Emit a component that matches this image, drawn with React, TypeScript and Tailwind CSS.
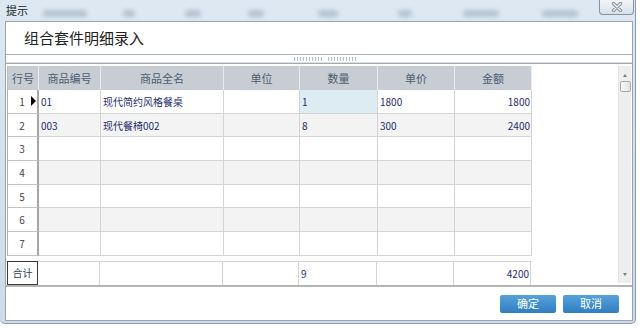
import React from "react";

// 组合套件明细录入 — a Win7-style modal dialog with a small data grid.
const FONT = { fontFamily: '"Noto Sans CJK SC", "Noto Sans", sans-serif' };

const COLS = ["w-[31px]", "w-[62px]", "w-[123px]", "w-[76px]", "w-[78px]", "w-[77px]", "w-[77px]"];
const HEAD = ["行号", "商品编号", "商品全名", "单位", "数量", "单价", "金额"];

const ROWS = [
  ["01", "现代简约风格餐桌", "", "1", "1800", "1800"],
  ["003", "现代餐椅002", "", "8", "300", "2400"],
  ["", "", "", "", "", ""],
  ["", "", "", "", "", ""],
  ["", "", "", "", "", ""],
  ["", "", "", "", "", ""],
  ["", "", "", "", "", ""],
];

// blurred column titles of the window behind the glass title bar
const BEHIND = [
  { x: "left-[43px]", w: "w-[44px]" },
  { x: "left-[123px]", w: "w-[12px]" },
  { x: "left-[185px]", w: "w-[16px]" },
  { x: "left-[248px]", w: "w-[16px]" },
  { x: "left-[318px]", w: "w-[20px]" },
  { x: "left-[398px]", w: "w-[14px]" },
  { x: "left-[463px]", w: "w-[36px]" },
  { x: "left-[542px]", w: "w-[36px]" },
];

function CloseIcon() {
  return (
    <svg width="14" height="10" viewBox="0 0 14 10">
      <path d="M3.5 1.5 L10.5 8.5 M10.5 1.5 L3.5 8.5" stroke="#8a8f96" strokeWidth="3.2" strokeLinecap="round" />
      <path d="M3.5 1.5 L10.5 8.5 M10.5 1.5 L3.5 8.5" stroke="#f4f6f8" strokeWidth="1.2" strokeLinecap="round" />
    </svg>
  );
}

function Grip() {
  const dots = Array.from({ length: 10 });
  return (
    <div className="flex gap-[6px]">
      {[0, 1].map((g) => (
        <div key={g} className="flex gap-[2px]">
          {dots.map((_, i) => (
            <span key={i} className="h-[4px] w-px bg-[#b9bfc6]" />
          ))}
        </div>
      ))}
    </div>
  );
}

function Scrollbar() {
  return (
    <div className="my-[2px] flex w-[13px] flex-col items-center border-l border-[#e4e4e4] bg-[#eeeeee]">
      <span className="mt-[8px] h-0 w-0 border-x-[2px] border-b-[3px] border-x-transparent border-b-[#7a7a7a]" />
      <div className="mt-[4px] h-[11px] w-[11px] rounded-[2px] border border-[#a9a9a9] bg-gradient-to-r from-[#f7f7f7] to-[#e3e3e3]" />
      <div className="flex-1" />
      <span className="mb-[7px] h-0 w-0 border-x-[2px] border-t-[3px] border-x-transparent border-t-[#7a7a7a]" />
    </div>
  );
}

function Grid() {
  return (
    <div className="flex flex-col pl-px pt-[2px]">
      {/* header */}
      <div className="flex h-[24px] border-l border-[#b6bcc4]">
        {HEAD.map((h, i) => (
          <div
            key={h}
            className={`${COLS[i]} flex items-center justify-center border-r border-[#e9ebee] bg-[#c8cdd4] text-[11px] text-[#4c5d72]`}
          >
            {h}
          </div>
        ))}
      </div>
      {/* body */}
      {ROWS.map((r, ri) => {
        const alt = ri % 2 === 1;
        return (
          <div key={ri} className="flex h-[23.7px] border-l border-[#b0b0b0]">
            <div className={`${COLS[0]} relative flex items-center justify-center border-r-2 border-b border-r-[#a6a6a6] border-b-[#c4c4c4] bg-white text-[10px] text-[#444]`}>
              <span className="pr-[1px]">{ri + 1}</span>
              {ri === 0 && (
                <span className="absolute right-[1px] h-0 w-0 border-y-[5px] border-l-[5px] border-y-transparent border-l-black" />
              )}
            </div>
            {r.map((c, ci) => {
              const sel = ri === 0 && ci === 3;
              const bg = sel ? "bg-[#ddebf2]" : alt ? "bg-[#f3f3f3]" : "bg-white";
              const align = ci === 5 ? "justify-end pr-[1px]" : "justify-start pl-[2px]";
              return (
                <div
                  key={ci}
                  className={`${COLS[ci + 1]} ${bg} ${align} flex items-center border-r border-b border-[#d4d4d4] text-[10px] text-[#1f2d6e]`}
                >
                  {c}
                </div>
              );
            })}
          </div>
        );
      })}
      <div className="h-[5px]" />
      {/* total row */}
      <div className="flex h-[24px]">
        <div className={`${COLS[0]} flex items-center justify-center border border-[#3a3a3a] bg-white text-[10px] text-[#2f3f55]`}>合计</div>
        {["", "", "", "9", "", "4200"].map((c, ci) => (
          <div
            key={ci}
            className={`${COLS[ci + 1]} ${ci === 5 ? "justify-end pr-[1px]" : "justify-start pl-[2px]"} flex items-center border-r border-t border-[#d4d4d4] text-[10px] text-[#1f2d6e]`}
          >
            {c}
          </div>
        ))}
      </div>
    </div>
  );
}

export default function App() {
  return (
    <div className="h-[328px] w-[640px] overflow-hidden bg-white" style={FONT}>
      <div className="flex h-[324px] w-[636px] flex-col rounded-b-[5px] border-r border-b border-[#8e9bab] bg-gradient-to-b from-[#dde8f2] via-[#d3e1ee] to-[#cddbe8]">
        {/* title bar */}
        <div className="relative flex h-[21px] items-start justify-between">
          {BEHIND.map((b, i) => (
            <span key={i} className={`absolute top-[10px] h-[7px] ${b.x} ${b.w} rounded-sm bg-[#8fa0b3] opacity-50 blur-[2px]`} />
          ))}
          <span className="relative pl-[6px] pt-[3px] text-[11px] leading-[14px] text-[#1a1a1a]">提示</span>
          <div className="relative mr-[1px] flex h-[15px] w-[35px] items-center justify-center rounded-b-[4px] border border-t-0 border-[#8893a1] bg-gradient-to-b from-[#f1f4f7] to-[#d9e1e9]">
            <CloseIcon />
          </div>
        </div>
        {/* client area */}
        <div className="ml-[5px] mr-[2px] flex h-[300px] flex-col border border-[#9ba4ae] bg-white">
          <div className="flex h-[33px] items-center border-b border-[#a9b0b8] pl-[18px] text-[15px] text-[#222]">
            组合套件明细录入
          </div>
          <div className="flex h-[8px] items-center justify-center border-b border-[#dcdfe3] pl-[12px]">
            <Grip />
          </div>
          <div className="flex h-[224px] border-t border-[#a3a9b0] border-b-2 border-b-[#b4b4b4]">
            <Grid />
            <div className="flex-1" />
            <Scrollbar />
            <div className="w-px" />
          </div>
          <div className="flex flex-1 items-center justify-end gap-[7px] pr-[13px]">
            {["确定", "取消"].map((t) => (
              <button
                key={t}
                type="button"
                className="flex h-[18px] w-[56px] items-center justify-center rounded-[2px] bg-gradient-to-b from-[#55a2dc] to-[#2f7ebf] text-[11px] text-white"
              >
                {t}
              </button>
            ))}
          </div>
        </div>
      </div>
    </div>
  );
}
